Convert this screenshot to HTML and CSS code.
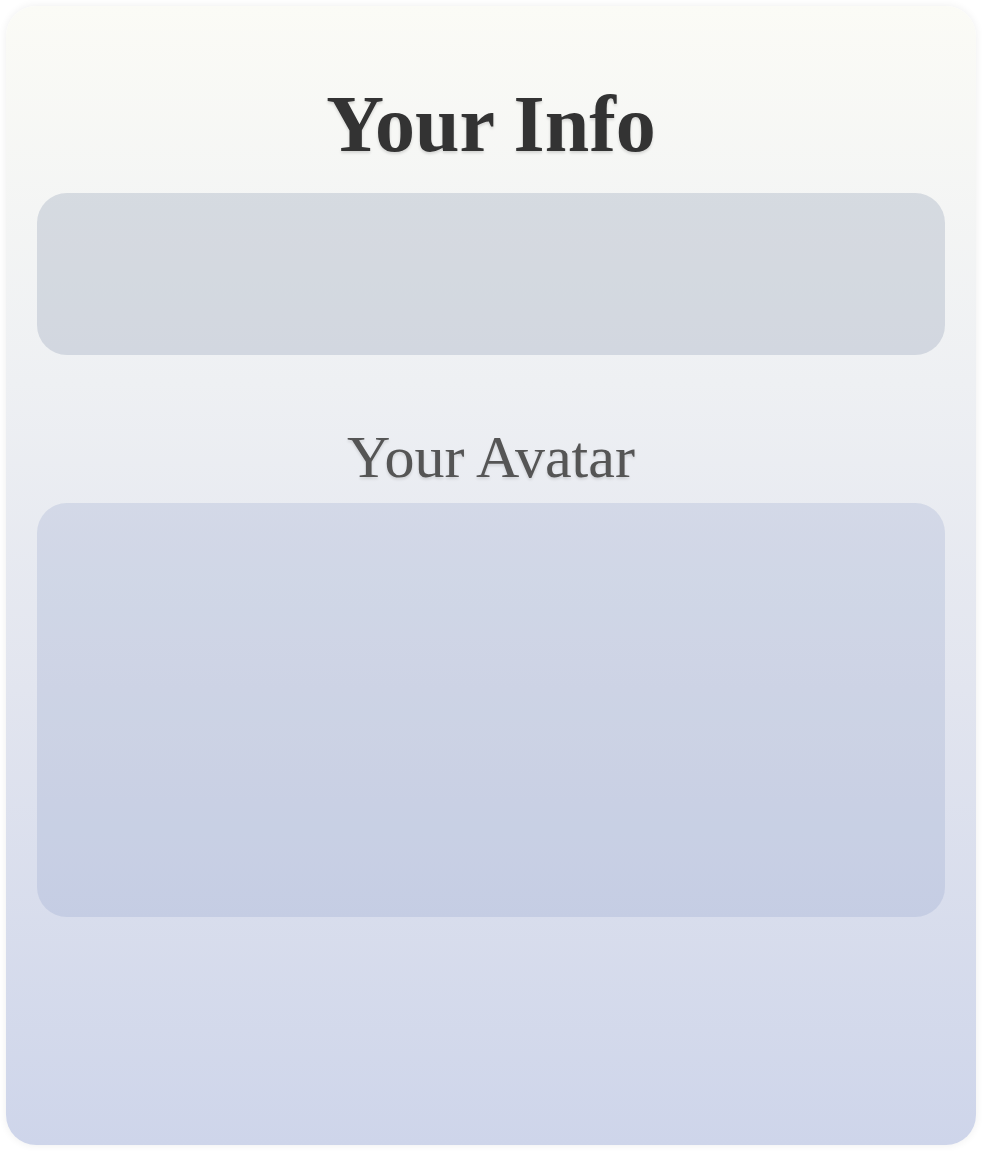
FILE: index.html
```html
<!DOCTYPE html>
<html lang="en">
<head>
<meta charset="utf-8">
<title>Your Info</title>
<link rel="stylesheet" href="styles.css">
</head>
<body>
  <main class="card">
    <h1 class="title">Your Info</h1>
    <section class="panel panel-info"></section>
    <h2 class="subtitle">Your Avatar</h2>
    <section class="panel panel-avatar"></section>
  </main>
</body>
</html>
```

FILE: styles.css
```css
html, body {
  margin: 0;
  padding: 0;
  background: #ffffff;
}

body {
  padding: 6px;
  font-family: "Liberation Serif", "DejaVu Serif", serif;
}

.card {
  box-sizing: border-box;
  height: 1139px;
  padding: 75px 31px 0;
  border-radius: 30px;
  background: linear-gradient(180deg, #fbfbf6 0%, #eef0f3 33%, #e2e5ef 60%, #ced5ea 100%);
  box-shadow: 0 0 8px rgba(0, 0, 0, 0.07);
  display: flex;
  flex-direction: column;
}

.title {
  margin: 0 0 26px;
  text-align: center;
  font-size: 80px;
  line-height: 86px;
  font-weight: 700;
  color: #333333;
  text-shadow: 0 2px 3px rgba(0, 0, 0, 0.14);
}

.subtitle {
  margin: 66px 0 9px;
  text-align: center;
  font-size: 60px;
  line-height: 73px;
  font-weight: 400;
  color: #555555;
  text-shadow: 0 2px 3px rgba(0, 0, 0, 0.12);
}

.panel {
  border-radius: 30px;
  background: rgba(148, 163, 184, 0.32);
}

.panel-info {
  height: 162px;
}

.panel-avatar {
  height: 414px;
  background: rgba(130, 150, 195, 0.22);
}
```
